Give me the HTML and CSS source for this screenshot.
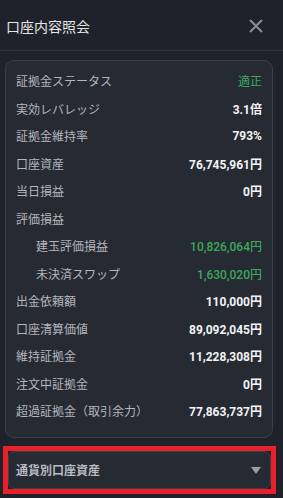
FILE: index.html
```html
<!DOCTYPE html>
<html lang="ja">
<head>
<meta charset="utf-8">
<link rel="stylesheet" href="styles.css">
</head>
<body>
<div class="header">
  <div class="title">口座内容照会</div>
  <svg class="close" width="14" height="14" viewBox="0 0 14 14"><path d="M1 1L13 13M13 1L1 13" stroke="#8b8e95" stroke-width="2" fill="none"/></svg>
</div>
<div class="card">
  <div class="row"><span class="label">証拠金ステータス</span><span class="value green normal">適正</span></div>
  <div class="row"><span class="label">実効レバレッジ</span><span class="value">3.1倍</span></div>
  <div class="row"><span class="label">証拠金維持率</span><span class="value">793%</span></div>
  <div class="row"><span class="label">口座資産</span><span class="value">76,745,961円</span></div>
  <div class="row"><span class="label">当日損益</span><span class="value">0円</span></div>
  <div class="row"><span class="label">評価損益</span></div>
  <div class="row indent"><span class="label">建玉評価損益</span><span class="value green">10,826,064円</span></div>
  <div class="row indent"><span class="label">未決済スワップ</span><span class="value green">1,630,020円</span></div>
  <div class="row"><span class="label">出金依頼額</span><span class="value">110,000円</span></div>
  <div class="row"><span class="label">口座清算価値</span><span class="value">89,092,045円</span></div>
  <div class="row"><span class="label">維持証拠金</span><span class="value">11,228,308円</span></div>
  <div class="row"><span class="label">注文中証拠金</span><span class="value">0円</span></div>
  <div class="row"><span class="label">超過証拠金（取引余力）</span><span class="value">77,863,737円</span></div>
</div>
<div class="accordion">
  <span class="acc-title">通貨別口座資産</span>
  <span class="tri"></span>
</div>
</body>
</html>
```
FILE: styles.css
```css
html, body {
  margin: 0;
  padding: 0;
  background: #1f222a;
  height: 100%;
}
body {
  font-family: Roboto, "Noto Sans CJK JP", sans-serif;
  color: #f2f2f2;
  overflow: hidden;
}
.header {
  height: 50px;
  border-bottom: 1px solid #30343d;
  display: flex;
  align-items: center;
  justify-content: space-between;
  padding: 0 20px 0 6px;
}
.title {
  font-family: "Noto Sans CJK JP", sans-serif;
  font-size: 14px;
  color: #e6e6e6;
  padding-top: 1px;
}
.close {
  display: block;
  margin-top: 2px;
}
.card {
  margin: 9px 10px 0 5px;
  background: #262a33;
  border: 1px solid #3b3f48;
  border-radius: 9px;
  padding: 6px 10px 12px 10px;
}
.row {
  height: 27.5px;
  display: flex;
  align-items: center;
  justify-content: space-between;
  font-size: 12px;
}
.row.indent .label {
  padding-left: 20px;
}
.label {
  font-family: "Noto Sans CJK JP", sans-serif;
  color: #b3b6bc;
}
.value {
  font-weight: 700;
  color: #f4f4f4;
}
.value.green {
  color: #3aa85c;
  font-weight: 500;
}
.value.normal {
  font-weight: 400;
}
.accordion {
  position: relative;
  margin: 13px 12px 0 8px;
  height: 36px;
  background: #262a33;
  border: 1px solid #3b3f48;
  border-radius: 7px;
  display: flex;
  align-items: center;
  justify-content: space-between;
  padding: 0 9px 0 7px;
}
.accordion::after {
  content: "";
  position: absolute;
  left: -6px;
  top: -6px;
  right: -6px;
  bottom: -6px;
  border: 5px solid #e8202a;
}
.acc-title {
  font-family: "Noto Sans CJK JP", sans-serif;
  font-size: 12px;
  font-weight: 700;
  color: #b8bbc1;
}
.tri {
  width: 0;
  height: 0;
  border-left: 5px solid transparent;
  border-right: 5px solid transparent;
  border-top: 7px solid #9a9da4;
  margin-top: 1px;
}
```
